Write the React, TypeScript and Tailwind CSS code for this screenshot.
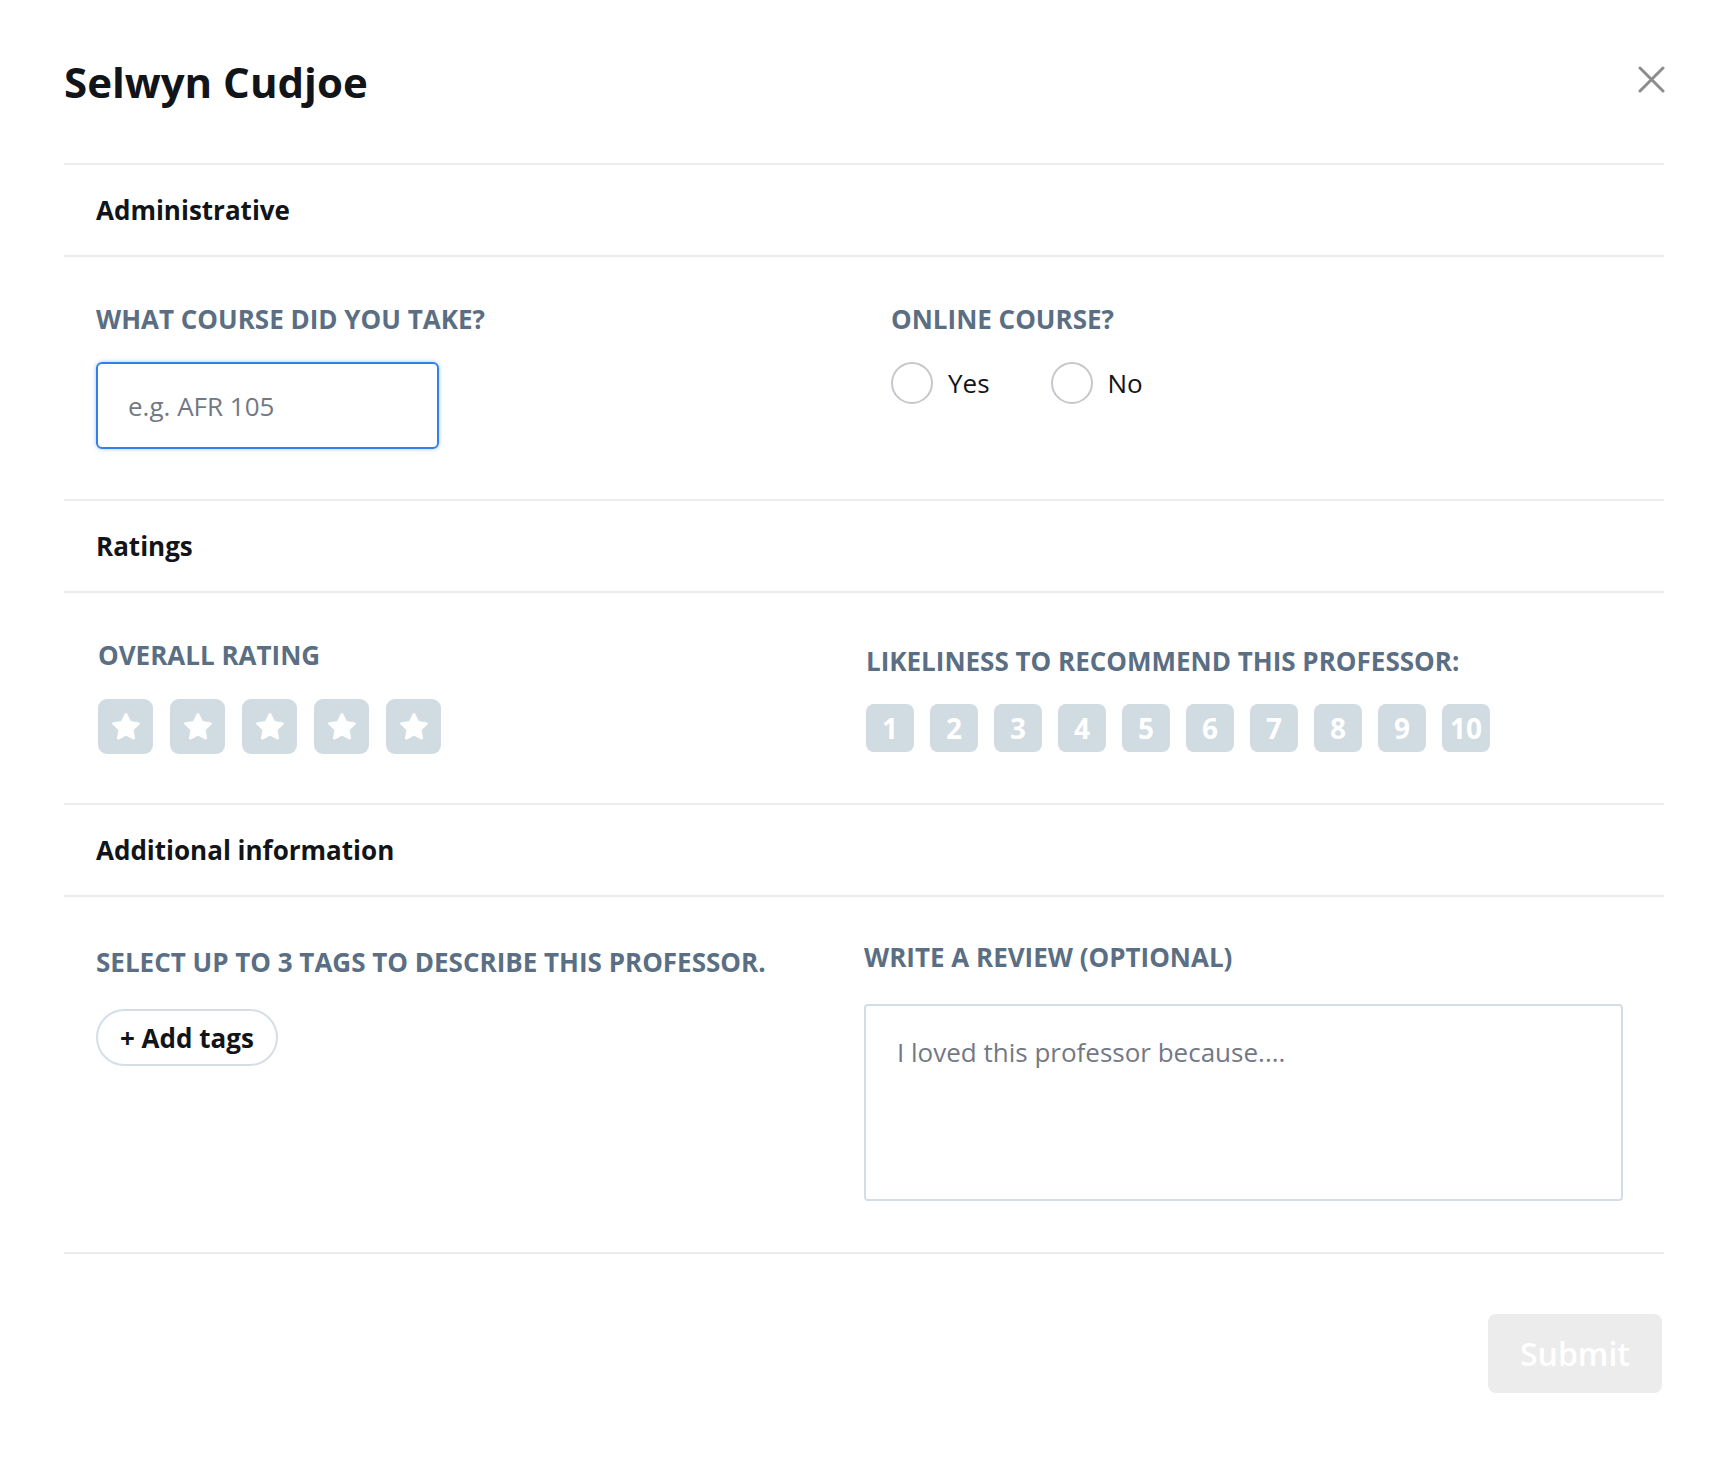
import React from 'react';

const labelCls = "text-[26px] leading-none font-bold uppercase text-[#5a6e84]";

const SectionHeader = ({ title }: { title: string }) => (
    <div className="h-[92px] flex items-center pl-8 border-b-2 border-[#ededed]">
        <h2 className="text-[26px] leading-none font-bold text-[#111418]">{title}</h2>
    </div>
);

const StarIcon = () => (
    <svg width="32" height="32" viewBox="0 0 24 24" fill="white" stroke="white" strokeWidth="2" strokeLinejoin="round">
        <path d="M12 2.5l2.9 5.9 6.5.95-4.7 4.6 1.1 6.45L12 17.35l-5.8 3.05 1.1-6.45-4.7-4.6 6.5-.95z" />
    </svg>
);

const Radio = ({ label }: { label: string }) => (
    <label className="flex items-center gap-[15px] cursor-pointer">
        <span className="w-[42px] h-[42px] rounded-full border-2 border-[#c6c6cc] bg-white" />
        <span className="text-[26px] leading-none text-[#111418]">{label}</span>
    </label>
);

const App = () => {
    return (
        <div className="w-full min-h-[1458px] bg-white pl-16 pr-[62px]" style={{ fontFamily: '"Open Sans", sans-serif' }}>
            {/* header */}
            <div className="h-[165px] flex justify-between items-start pt-[58px] border-b-2 border-[#ededed]">
                <h1 className="text-[42px] leading-[48px] font-bold text-[#111418]">Selwyn Cudjoe</h1>
                <button className="mt-[8px] -mr-[1px]" aria-label="close">
                    <svg width="27" height="27" viewBox="0 0 27 27" stroke="#8c8c8c" strokeWidth="3" strokeLinecap="round">
                        <path d="M2 2l23 23M25 2L2 25" />
                    </svg>
                </button>
            </div>

            <SectionHeader title="Administrative" />
            <div className="h-[244px] grid grid-cols-[768px_1fr] pl-8 border-b-2 border-[#ededed]">
                <div className="pt-[49px]">
                    <p className={labelCls}>What course did you take?</p>
                    <input
                        placeholder="e.g. AFR 105"
                        className="mt-[30px] w-[343px] h-[87px] rounded-[6px] border-2 border-[#2f80ed] shadow-[0_0_4px_rgba(47,128,237,0.45)] px-[30px] text-[26px] text-[#111418] placeholder:text-[#737885] outline-none"
                    />
                </div>
                <div className="pt-[49px] pl-[27px]">
                    <p className={labelCls}>Online course?</p>
                    <div className="mt-[30px] flex items-center gap-[61px]">
                        <Radio label="Yes" />
                        <Radio label="No" />
                    </div>
                </div>
            </div>

            <SectionHeader title="Ratings" />
            <div className="h-[212px] grid grid-cols-[768px_1fr] pl-8 border-b-2 border-[#ededed]">
                <div className="pt-[49px] pl-[2px]">
                    <p className={labelCls}>Overall rating</p>
                    <div className="mt-[31px] flex gap-[17px]">
                        {[1, 2, 3, 4, 5].map((n) => (
                            <div key={n} className="w-[55px] h-[55px] rounded-[9px] bg-[#d0dbe2] flex items-center justify-center">
                                <StarIcon />
                            </div>
                        ))}
                    </div>
                </div>
                <div className="pt-[55px] pl-[2px]">
                    <p className={labelCls}>Likeliness to recommend this professor:</p>
                    <div className="mt-[30px] flex gap-4">
                        {[1, 2, 3, 4, 5, 6, 7, 8, 9, 10].map((n) => (
                            <div key={n} className="w-12 h-12 rounded-[8px] bg-[#d0dbe2] flex items-center justify-center text-[28px] leading-none font-bold text-white">
                                {n}
                            </div>
                        ))}
                    </div>
                </div>
            </div>

            <SectionHeader title="Additional information" />
            <div className="h-[357px] grid grid-cols-[768px_1fr] pl-8 border-b-2 border-[#ededed]">
                <div className="pt-[52px]">
                    <p className={labelCls}>Select up to 3 tags to describe this professor.</p>
                    <button className="mt-[34px] h-[57px] px-[22px] rounded-full border-2 border-[#d5dee5] text-[26px] leading-none font-bold text-[#111418]">
                        + Add tags
                    </button>
                </div>
                <div className="pt-[47px]">
                    <p className={labelCls}>Write a review (optional)</p>
                    <textarea
                        placeholder="I loved this professor because...."
                        className="mt-[34px] block w-[759px] h-[197px] rounded-[4px] border-2 border-[#d3dde4] px-[31px] pt-[28px] pb-[26px] text-[26px] leading-[36px] text-[#111418] placeholder:text-[#737885] outline-none resize-none"
                    />
                </div>
            </div>

            <div className="flex justify-end pt-[60px] pr-[2px]">
                <button disabled className="w-[174px] h-[79px] rounded-[8px] bg-[#ececec] text-[32px] font-semibold text-white">
                    Submit
                </button>
            </div>
        </div>
    );
};

export default App;
